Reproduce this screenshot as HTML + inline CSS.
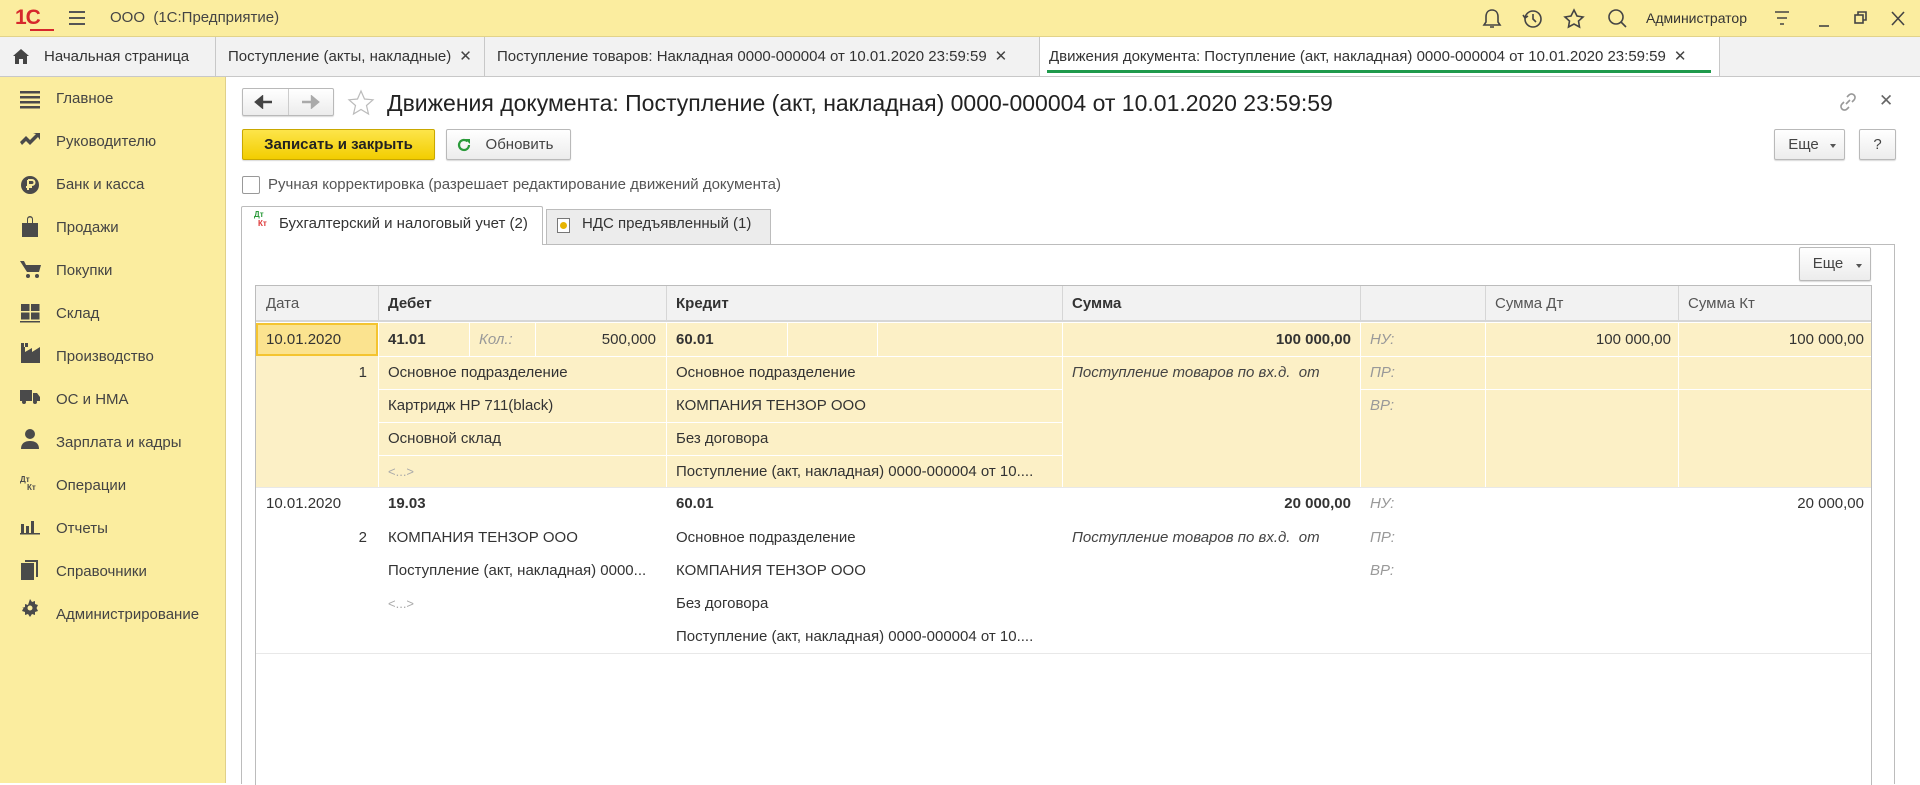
<!DOCTYPE html>
<html><head><meta charset="utf-8">
<style>
*{box-sizing:border-box;margin:0;padding:0}
body{width:1920px;height:783px;overflow:hidden;font-family:"Liberation Sans",Arial,sans-serif;font-size:15px;color:#404040;background:#fff;position:relative}
.abs{position:absolute}
#top{left:0;top:0;width:1920px;height:37px;background:#fbed9f;border-bottom:1px solid #e2d38a}
#tabs{left:0;top:37px;width:1920px;height:40px;background:#f2f2f2;border-bottom:1px solid #c8c8c8}
.tab{position:absolute;top:0;height:39px;border-right:1px solid #c8c8c8;line-height:39px;font-size:15px;color:#333;padding-left:12px;white-space:nowrap}
.tab .x{font-size:15px;margin-left:8px;color:#444}
#side{left:0;top:77px;width:226px;height:706px;background:#fbed9f;border-right:1px solid #e0d08a}
.si{position:absolute;left:56px;font-size:15px;color:#444;line-height:20px}
.btn{position:absolute;border:1px solid #b9b9b9;border-radius:2px;background:linear-gradient(#fff,#ececec);box-shadow:0 1px 1px rgba(0,0,0,.15);font-size:15px;color:#444;text-align:center}
.cell{position:absolute;font-size:15px;color:#333;white-space:nowrap;line-height:33px}
.b{font-weight:bold}
.it{font-style:italic;color:#999}
.hl{position:absolute;background:#fcf0c6}
.vl{position:absolute;width:1px}
.hline{position:absolute;height:1px}
</style></head><body>

<div id="top" class="abs">
  <div class="abs" style="left:15px;top:6px;font-weight:bold;font-size:21px;color:#d6282c;letter-spacing:-1px">1С</div>
  <div class="abs" style="left:30px;top:29px;width:24px;height:2px;background:#d6282c"></div>
  <div class="abs" style="left:69px;top:11px;width:16px;height:2px;background:#555;box-shadow:0 6px 0 #555,0 12px 0 #555"></div>
  <div class="abs" style="left:110px;top:9px;font-size:15px;color:#444">ООО&nbsp; (1С:Предприятие)</div>
  <svg class="abs" style="left:1480px;top:6px" width="430" height="26" viewBox="0 0 430 26" fill="none" stroke="#444" stroke-width="1.6">
    <path d="M12 4c-4 0-6 3-6 7v5l-2 3h16l-2-3v-5c0-4-2-7-6-7zM10 21h4"/>
    <circle cx="53" cy="13" r="8"/><path d="M53 8v5l3 3M43 9l2 3 3-2"/>
    <path d="M94 4l3 6 6 1-4.5 4 1 6-5.5-3-5.5 3 1-6-4.5-4 6-1z"/>
    <circle cx="136" cy="11" r="7"/><path d="M141 16l5 5"/>
    <path d="M295 6h14M297 12h10M300 18h4" />
    <path d="M339 20h10"/>
    <rect x="375" y="9" width="8" height="8"/><path d="M378 9V6h8v8h-3"/>
    <path d="M412 6l12 13M424 6l-12 13"/>
  </svg>
  <div class="abs" style="left:1646px;top:10px;font-size:14px;color:#333">Администратор</div>
</div>

<div id="tabs" class="abs">
  <div class="tab" style="left:0;width:216px;padding-left:44px">Начальная страница</div>
  <svg class="abs" style="left:13px;top:12px" width="16" height="15" viewBox="0 0 16 15"><path d="M8 0L0 7h2v8h4v-5h4v5h4V7h2z" fill="#444"/></svg>
  <div class="tab" style="left:216px;width:269px">Поступление (акты, накладные)<span class="x">✕</span></div>
  <div class="tab" style="left:485px;width:555px">Поступление товаров: Накладная 0000-000004 от 10.01.2020 23:59:59<span class="x">✕</span></div>
  <div class="tab" style="left:1040px;width:680px;background:#fff;padding-left:9px">Движения документа: Поступление (акт, накладная) 0000-000004 от 10.01.2020 23:59:59<span class="x">✕</span>
    <div class="abs" style="left:7px;right:8px;bottom:3px;height:3px;background:#1f9a4c"></div></div>
</div>

<div id="side" class="abs">
  <svg class="abs" style="left:20px;top:0" width="24" height="560" viewBox="0 0 24 560" fill="#4a4a4a">
    <g transform="translate(0,14)"><rect x="0" y="0" width="20" height="2.5"/><rect x="0" y="5" width="20" height="2.5"/><rect x="0" y="10" width="20" height="2.5"/><rect x="0" y="15" width="20" height="2.5"/></g>
    <path d="M0 67l6-6 4 4 6-6-3-1h7v7l-2-3-8 8-4-4-4 4z" transform="translate(0,-2)"/>
    <circle cx="10" cy="108" r="9"/><path d="M8 103h4a2.5 2.5 0 010 5H8M6 110h6M8 103v10" stroke="#fbed9f" stroke-width="2" fill="none"/>
    <path d="M2 146h16v14H2z M7 146v-4a3 3 0 016 0v4" /><path d="M8 146v-3.5a2 2 0 014 0V146" fill="#fbed9f"/>
    <path d="M0 184h4l2 4h15l-2 7H7z"/><circle cx="8" cy="199" r="2"/><circle cx="17" cy="199" r="2"/>
    <rect x="1" y="227" width="8.5" height="7"/><rect x="11" y="227" width="8.5" height="7"/><rect x="1" y="235.5" width="8.5" height="7"/><rect x="11" y="235.5" width="8.5" height="7"/><rect x="0" y="244" width="20" height="1.5"/>
    <path d="M1 270h4v5l7-4v4l8-5v16H1z"/><rect x="1" y="266" width="3" height="4"/><rect x="5" y="266" width="3" height="4"/>
    <path d="M0 313h12v11H0zM13 316h4l3 4v4h-7z"/><circle cx="4" cy="325" r="2"/><circle cx="15" cy="325" r="2"/>
    <circle cx="10" cy="357" r="5"/><path d="M1 372c0-6 4-8 9-8s9 2 9 8z"/>
    <text x="0" y="405" font-size="8" font-family="Liberation Sans" font-weight="bold">Дт</text><text x="7" y="413" font-size="8" font-family="Liberation Sans" font-weight="bold">Кт</text>
    <rect x="1" y="447" width="3" height="9"/><rect x="6" y="449" width="3" height="7"/><rect x="11" y="444" width="3" height="12"/><rect x="0" y="456" width="20" height="1.5"/>
    <rect x="1" y="486" width="13" height="17"/><path d="M5 483h13v17h-2V485H5z"/>
    <path d="M10 522l2 3 3-1 0 3 3 1-1.5 3 1.5 3-3 1 0 3-3-1-2 3-2-3-3 1 0-3-3-1 1.5-3L2 531l3-1 0-3 3 1z"/><circle cx="10" cy="531" r="2.5" fill="#fbed9f"/>
  </svg>
  <div class="si" style="top:12px">Главное</div>
  <div class="si" style="top:55px">Руководителю</div>
  <div class="si" style="top:98px">Банк и касса</div>
  <div class="si" style="top:141px">Продажи</div>
  <div class="si" style="top:184px">Покупки</div>
  <div class="si" style="top:227px">Склад</div>
  <div class="si" style="top:270px">Производство</div>
  <div class="si" style="top:313px">ОС и НМА</div>
  <div class="si" style="top:356px">Зарплата и кадры</div>
  <div class="si" style="top:399px">Операции</div>
  <div class="si" style="top:442px">Отчеты</div>
  <div class="si" style="top:485px">Справочники</div>
  <div class="si" style="top:528px">Администрирование</div>
</div>

<div class="btn" style="left:242px;top:88px;width:92px;height:28px"></div>
<div class="abs" style="left:288px;top:89px;width:1px;height:26px;background:#ccc"></div>
<svg class="abs" style="left:254px;top:95px" width="72" height="14" viewBox="0 0 72 14"><path d="M2 7h16M2 7l6-5v10z" stroke="#444" stroke-width="2.4" fill="#444"/><path d="M48 7h16M64 7l-6-5v10z" stroke="#aaa" stroke-width="2.4" fill="#aaa"/></svg>
<svg class="abs" style="left:347px;top:89px" width="28" height="28" viewBox="0 0 28 28"><path d="M14 2l3.5 8 8.5.8-6.5 5.7 2 8.5L14 20.5 6.5 25l2-8.5L2 10.8l8.5-.8z" fill="none" stroke="#bbb" stroke-width="1.2"/></svg>
<div class="abs" style="left:387px;top:90px;font-size:23px;color:#222;white-space:nowrap">Движения документа: Поступление (акт, накладная) 0000-000004 от 10.01.2020 23:59:59</div>
<svg class="abs" style="left:1838px;top:92px" width="20" height="20" viewBox="0 0 20 20" fill="none" stroke="#999" stroke-width="1.6"><path d="M8 12l4-4M9 5l2-2a3.5 3.5 0 015 5l-2 2M11 15l-2 2a3.5 3.5 0 01-5-5l2-2"/></svg>
<div class="abs" style="left:1879px;top:91px;font-size:17px;color:#666">✕</div>

<div class="btn" style="left:242px;top:129px;width:193px;height:31px;background:linear-gradient(#fde54a,#f2cd00);border-color:#c9a800;font-weight:bold;color:#222;line-height:29px">Записать и закрыть</div>
<div class="btn" style="left:446px;top:129px;width:125px;height:31px;line-height:29px;padding-left:22px">Обновить</div>
<svg class="abs" style="left:456px;top:137px" width="16" height="16" viewBox="0 0 16 16"><path d="M13 8a5 5 0 11-1.5-3.6" fill="none" stroke="#2a9a3a" stroke-width="2.2"/><path d="M9 2h5v5z" fill="#2a9a3a"/></svg>
<div class="btn" style="left:1774px;top:129px;width:71px;height:31px;line-height:29px;padding-right:12px">Еще</div>
<div class="abs" style="left:1830px;top:144px;border:3px solid transparent;border-top:4px solid #555"></div>
<div class="btn" style="left:1859px;top:129px;width:37px;height:31px;line-height:29px">?</div>

<div class="abs" style="left:242px;top:176px;width:18px;height:18px;border:1px solid #999;border-radius:2px;background:#fff"></div>
<div class="abs" style="left:268px;top:176px;font-size:15px;color:#555">Ручная корректировка (разрешает редактирование движений документа)</div>

<div class="abs" style="left:241px;top:244px;width:1654px;height:540px;border:1px solid #bcbcbc;border-bottom:none"></div>
<div class="abs" style="left:241px;top:206px;width:302px;height:39px;border:1px solid #bcbcbc;border-bottom:none;background:#fff;border-radius:2px 2px 0 0"></div>
<div class="abs" style="left:254px;top:211px;font-size:8px;font-weight:bold;color:#2a9a3a;line-height:8px">Дт</div>
<div class="abs" style="left:258px;top:220px;font-size:8px;font-weight:bold;color:#d33;line-height:8px">Кт</div>
<div class="abs" style="left:279px;top:215px;font-size:15px;color:#333">Бухгалтерский и налоговый учет (2)</div>
<div class="abs" style="left:546px;top:209px;width:225px;height:35px;border:1px solid #bcbcbc;border-bottom:none;background:#ececec"></div>
<div class="abs" style="left:557px;top:218px;width:13px;height:15px;border:1px solid #777;background:#fff"></div>
<div class="abs" style="left:560px;top:222px;width:7px;height:7px;border-radius:50%;background:#e7b400"></div>
<div class="abs" style="left:582px;top:215px;font-size:15px;color:#333">НДС предъявленный (1)</div>

<div class="btn" style="left:1799px;top:247px;width:72px;height:34px;line-height:32px;padding-right:14px">Еще</div>
<div class="abs" style="left:1856px;top:264px;border:3px solid transparent;border-top:4px solid #555"></div>

<div class="abs" style="left:255px;top:285px;width:1617px;height:500px;border:1px solid #bcbcbc;border-bottom:none"></div>
<div class="abs" style="left:256px;top:286px;width:1615px;height:36px;background:#f2f2f2;border-bottom:2px solid #d6d6d6"></div>
<div class="vl" style="left:378px;top:286px;height:36px;background:#d6d6d6"></div>
<div class="vl" style="left:666px;top:286px;height:36px;background:#d6d6d6"></div>
<div class="vl" style="left:1062px;top:286px;height:36px;background:#d6d6d6"></div>
<div class="vl" style="left:1360px;top:286px;height:36px;background:#d6d6d6"></div>
<div class="vl" style="left:1485px;top:286px;height:36px;background:#d6d6d6"></div>
<div class="vl" style="left:1678px;top:286px;height:36px;background:#d6d6d6"></div>
<div class="cell" style="left:266px;top:286px;line-height:36px;color:#555">Дата</div>
<div class="cell b" style="left:388px;top:286px;line-height:36px">Дебет</div>
<div class="cell b" style="left:676px;top:286px;line-height:36px">Кредит</div>
<div class="cell b" style="left:1072px;top:286px;line-height:36px">Сумма</div>
<div class="cell" style="left:1495px;top:286px;line-height:36px;color:#555">Сумма Дт</div>
<div class="cell" style="left:1688px;top:286px;line-height:36px;color:#555">Сумма Кт</div>

<div class="hl" style="left:256px;top:323px;width:1615px;height:164px"></div>
<div class="abs" style="left:256px;top:323px;width:122px;height:33px;background:#fbe38f;border:2px solid #f4c430"></div>
<div class="vl" style="left:378px;top:323px;height:164px;background:#fff"></div>
<div class="vl" style="left:666px;top:323px;height:164px;background:#fff"></div>
<div class="vl" style="left:1062px;top:323px;height:164px;background:#fff"></div>
<div class="vl" style="left:1360px;top:323px;height:164px;background:#fff"></div>
<div class="vl" style="left:1485px;top:323px;height:164px;background:#fff"></div>
<div class="vl" style="left:1678px;top:323px;height:164px;background:#fff"></div>
<div class="vl" style="left:469px;top:323px;height:33px;background:#fff"></div>
<div class="vl" style="left:535px;top:323px;height:33px;background:#fff"></div>
<div class="vl" style="left:787px;top:323px;height:33px;background:#fff"></div>
<div class="vl" style="left:877px;top:323px;height:33px;background:#fff"></div>
<div class="hline" style="left:378px;top:356px;width:684px;background:#fff"></div>
<div class="hline" style="left:378px;top:389px;width:684px;background:#fff"></div>
<div class="hline" style="left:378px;top:422px;width:684px;background:#fff"></div>
<div class="hline" style="left:378px;top:455px;width:684px;background:#fff"></div>
<div class="hline" style="left:1062px;top:356px;width:809px;background:#fff"></div>
<div class="hline" style="left:1360px;top:389px;width:511px;background:#fff"></div>
<div class="hline" style="left:256px;top:487px;width:1615px;background:#e8e8e8"></div>

<div class="cell" style="left:266px;top:323px">10.01.2020</div>
<div class="cell b" style="left:388px;top:323px">41.01</div>
<div class="cell it" style="left:479px;top:323px">Кол.:</div>
<div class="cell" style="left:535px;top:323px;width:121px;text-align:right">500,000</div>
<div class="cell b" style="left:676px;top:323px">60.01</div>
<div class="cell b" style="left:1062px;top:323px;width:289px;text-align:right">100 000,00</div>
<div class="cell it" style="left:1370px;top:323px">НУ:</div>
<div class="cell" style="left:1485px;top:323px;width:186px;text-align:right">100 000,00</div>
<div class="cell" style="left:1678px;top:323px;width:186px;text-align:right">100 000,00</div>
<div class="cell" style="left:256px;top:356px;width:111px;text-align:right">1</div>
<div class="cell" style="left:388px;top:356px">Основное подразделение</div>
<div class="cell" style="left:676px;top:356px">Основное подразделение</div>
<div class="cell it" style="left:1072px;top:356px;color:#444">Поступление товаров по вх.д.&nbsp; от</div>
<div class="cell it" style="left:1370px;top:356px">ПР:</div>
<div class="cell" style="left:388px;top:389px">Картридж HP 711(black)</div>
<div class="cell" style="left:676px;top:389px">КОМПАНИЯ ТЕНЗОР ООО</div>
<div class="cell it" style="left:1370px;top:389px">ВР:</div>
<div class="cell" style="left:388px;top:422px">Основной склад</div>
<div class="cell" style="left:676px;top:422px">Без договора</div>
<div class="cell" style="left:388px;top:455px;color:#aaa;font-size:13px">&lt;...&gt;</div>
<div class="cell" style="left:676px;top:455px">Поступление (акт, накладная) 0000-000004 от 10....</div>

<div class="cell" style="left:266px;top:487px">10.01.2020</div>
<div class="cell b" style="left:388px;top:487px">19.03</div>
<div class="cell b" style="left:676px;top:487px">60.01</div>
<div class="cell b" style="left:1062px;top:487px;width:289px;text-align:right">20 000,00</div>
<div class="cell it" style="left:1370px;top:487px">НУ:</div>
<div class="cell" style="left:1678px;top:487px;width:186px;text-align:right">20 000,00</div>
<div class="cell" style="left:256px;top:521px;width:111px;text-align:right">2</div>
<div class="cell" style="left:388px;top:521px">КОМПАНИЯ ТЕНЗОР ООО</div>
<div class="cell" style="left:676px;top:521px">Основное подразделение</div>
<div class="cell it" style="left:1072px;top:521px;color:#444">Поступление товаров по вх.д.&nbsp; от</div>
<div class="cell it" style="left:1370px;top:521px">ПР:</div>
<div class="cell" style="left:388px;top:554px">Поступление (акт, накладная) 0000...</div>
<div class="cell" style="left:676px;top:554px">КОМПАНИЯ ТЕНЗОР ООО</div>
<div class="cell it" style="left:1370px;top:554px">ВР:</div>
<div class="cell" style="left:388px;top:587px;color:#aaa;font-size:13px">&lt;...&gt;</div>
<div class="cell" style="left:676px;top:587px">Без договора</div>
<div class="cell" style="left:676px;top:620px">Поступление (акт, накладная) 0000-000004 от 10....</div>
<div class="hline" style="left:256px;top:653px;width:1615px;background:#e8e8e8"></div>

</body></html>
